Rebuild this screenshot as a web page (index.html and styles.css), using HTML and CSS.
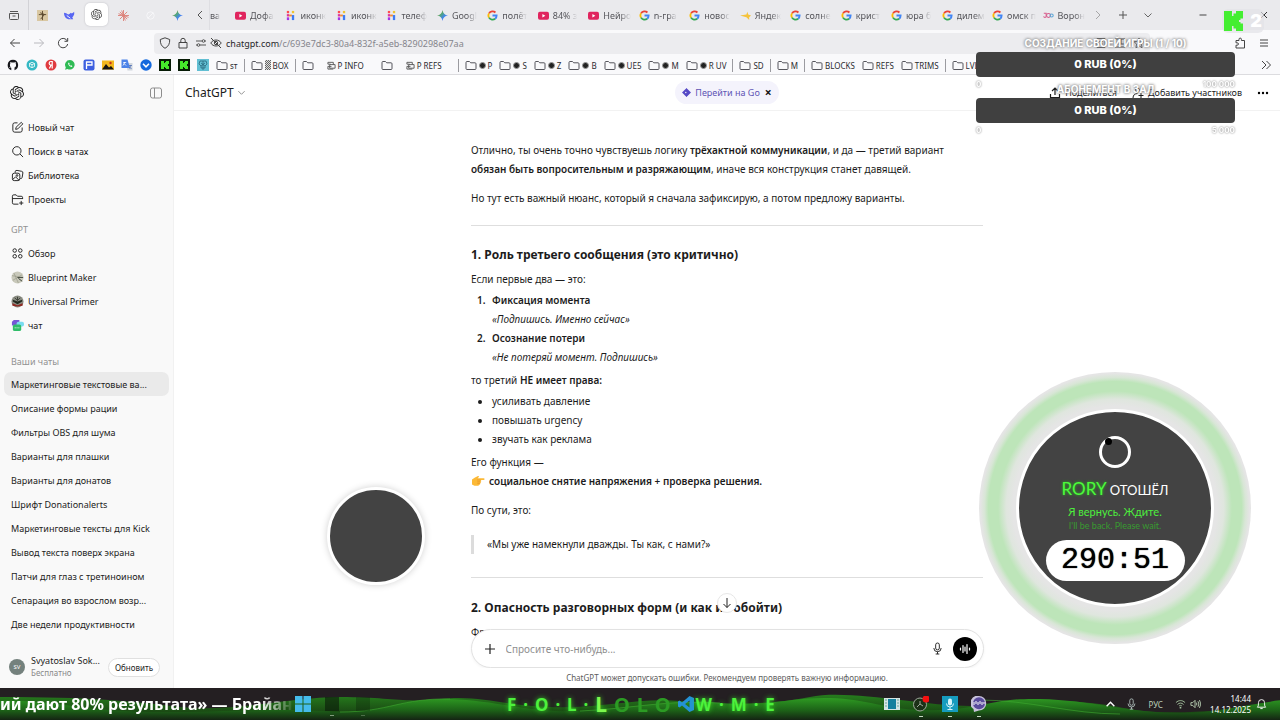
FILE: index.html
```html
<!DOCTYPE html>
<html lang="ru">
<head>
<meta charset="utf-8">
<title>ChatGPT</title>
<link rel="stylesheet" href="styles.css">
</head>
<body>
<svg class="defs" aria-hidden="true">
  <defs>
    <linearGradient id="gem" x1="0" y1="0" x2="1" y2="1"><stop offset="0" stop-color="#e5533d"/><stop offset=".35" stop-color="#56a86b"/><stop offset=".65" stop-color="#4285f4"/><stop offset="1" stop-color="#8a5cf6"/></linearGradient>
    <symbol id="gpt" viewBox="0 0 24 24"><path fill="currentColor" d="M22.282 9.821a5.985 5.985 0 0 0-.516-4.91 6.046 6.046 0 0 0-6.51-2.9A6.065 6.065 0 0 0 4.981 4.18a5.985 5.985 0 0 0-3.998 2.9 6.046 6.046 0 0 0 .743 7.097 5.98 5.98 0 0 0 .51 4.911 6.051 6.051 0 0 0 6.515 2.9A5.985 5.985 0 0 0 13.26 24a6.056 6.056 0 0 0 5.772-4.206 5.99 5.99 0 0 0 3.997-2.9 6.056 6.056 0 0 0-.747-7.073zM13.26 22.43a4.476 4.476 0 0 1-2.876-1.04l.141-.081 4.779-2.758a.795.795 0 0 0 .392-.681v-6.737l2.02 1.168a.071.071 0 0 1 .038.052v5.583a4.504 4.504 0 0 1-4.494 4.494zM3.6 18.304a4.47 4.47 0 0 1-.535-3.014l.142.085 4.783 2.759a.771.771 0 0 0 .78 0l5.843-3.369v2.332a.08.08 0 0 1-.033.062L9.74 19.95a4.5 4.5 0 0 1-6.14-1.646zM2.34 7.896a4.485 4.485 0 0 1 2.366-1.973V11.6a.766.766 0 0 0 .388.676l5.815 3.355-2.02 1.168a.076.076 0 0 1-.071 0l-4.83-2.786A4.504 4.504 0 0 1 2.34 7.872zm16.597 3.855l-5.833-3.387L15.119 7.2a.076.076 0 0 1 .071 0l4.83 2.791a4.494 4.494 0 0 1-.676 8.105v-5.678a.79.79 0 0 0-.407-.667zm2.01-3.023l-.141-.085-4.774-2.782a.776.776 0 0 0-.785 0L9.409 9.23V6.897a.066.066 0 0 1 .028-.061l4.83-2.787a4.5 4.5 0 0 1 6.68 4.66zm-12.64 4.135l-2.02-1.164a.08.08 0 0 1-.038-.057V6.075a4.5 4.5 0 0 1 7.375-3.453l-.142.08L8.704 5.46a.795.795 0 0 0-.393.681zm1.097-2.365l2.602-1.5 2.607 1.5v2.999l-2.597 1.5-2.607-1.5z"/></symbol>
    <symbol id="yt" viewBox="0 0 12 12"><rect x="0" y="2" width="12" height="8.500" rx="2" fill="#e0245e"/><path d="M4.800 4.300v3.800L8 6.200z" fill="#fff"/></symbol>
    <symbol id="goo" viewBox="0 0 12 12"><g fill="none" stroke-width="2"><path d="M9.200 2.700A4.500 4.500 0 0 0 2.200 3.700" stroke="#ea4335"/><path d="M2.200 3.700a4.500 4.500 0 0 0 0 4.600" stroke="#fbbc05"/><path d="M2.200 8.300a4.500 4.500 0 0 0 6.700 1.200" stroke="#34a853"/><path d="M8.900 9.500A4.500 4.500 0 0 0 10.500 6H6" stroke="#4285f4"/></g></symbol>
    <symbol id="hh" viewBox="0 0 12 12"><path d="M2 1h2.500v2.500H2z" fill="#ff4d4d"/><path d="M2 4.500h2.500V7H2z" fill="#e0359a"/><path d="M2 8h2.500v3H2z" fill="#a435e8"/><path d="M4.500 5h3v2h-3z" fill="#f48a2b"/><path d="M7.500 5.500H10V11H7.500z" fill="#3d7bf5"/><path d="M7.500 1H10v2.500H7.500z" fill="#efc430"/></symbol>
    <symbol id="spark" viewBox="0 0 12 12"><path d="M6 0c.5 3.500 2.500 5.500 6 6-3.500.5-5.500 2.500-6 6-.5-3.500-2.500-5.500-6-6 3.500-.5 5.500-2.500 6-6z" fill="url(#gem)"/></symbol>
    <symbol id="yan" viewBox="0 0 12 12"><path d="M0 6l7-1 1-3 1 3 3 1-2 2 0 3-3-3z" fill="#f5c33b"/></symbol>
    <symbol id="loop" viewBox="0 0 14 12"><g fill="none" stroke-width="1.300"><path d="M1 3h3v4a1.500 1.500 0 0 1-3 0" stroke="#d65b8b"/><circle cx="7" cy="6" r="2.500" stroke="#d65b8b"/><circle cx="11" cy="6" r="2" stroke="#5aa6d6"/></g></symbol>
    <symbol id="folder" viewBox="0 0 12 11"><path d="M1 2.500a1 1 0 0 1 1-1h2.500l1.200 1.300H10a1 1 0 0 1 1 1V8.500a1 1 0 0 1-1 1H2a1 1 0 0 1-1-1z" fill="none" stroke="#55555c" stroke-width="1"/></symbol>
    <symbol id="kick" viewBox="0 0 12 12"><path d="M0 0h12v12H0z" fill="#061b05"/><path d="M2 2h3v2h1V3h1V2h3v3H9v2h1v3H7V9H6V8H5v2H2z" fill="#45e82b"/></symbol>
    <symbol id="note" viewBox="0 0 10 10"><path d="M1 1.500h6v2.500M3 4h6v4H3zM1 6h4M1 1.500v2h3M1 6v3h6" fill="none" stroke="#555" stroke-width="1"/></symbol>
    <symbol id="mic" viewBox="0 0 12 14"><rect x="4" y="1" width="4" height="7.500" rx="2" fill="none" stroke="currentColor"/><path d="M2 6.500a4 4 0 0 0 8 0M6 10.500V13M4 13h4" fill="none" stroke="currentColor"/></symbol>
    <symbol id="down" viewBox="0 0 10 10"><path d="M1.500 3.500 5 7l3.500-3.500" fill="none" stroke="currentColor"/></symbol>
    <symbol id="right" viewBox="0 0 10 10"><path d="M3 1l4 4-4 4" fill="none" stroke="currentColor"/></symbol>
  </defs>
</svg>

<header class="browser">
  <div class="tabstrip">
    <button class="tab-tool overview" aria-label="Обзор вкладок"><svg viewBox="0 0 12 12"><path d="M2 2.500h8M1.500 4.500h9v5a1 1 0 0 1-1 1h-7a1 1 0 0 1-1-1zM4.500 7h3" fill="none" stroke="#555" stroke-width="1"/></svg></button>
    <div class="pinned">
      <button class="pin" aria-label="Вкладка 1"><svg viewBox="0 0 12 12"><path d="M0 0h12v12H0z" fill="#d9c7a2"/><path d="M6 1v10M2 5h8M3.500 3l5 2M4 10l4-5" stroke="#5b482d" fill="none"/></svg></button>
      <button class="pin" aria-label="Вкладка 2"><svg viewBox="0 0 12 12"><path d="M0 3c2 0 3 1 5 2 1-1 2-1 2-2 1 1 2 1 4-1 1 4-2 6-2 6l1 2H8C3 11 0 8 0 3z" fill="#5866f2"/><path d="M3 6l4 3" stroke="#fff"/></svg></button>
      <button class="pin active" aria-label="ChatGPT"><svg class="ink"><use href="#gpt"/></svg></button>
      <button class="pin" aria-label="Вкладка 4"><svg viewBox="0 0 12 12"><path d="M6 0v12M0 6h12M2 2l8 8M10 2l-8 8M4 .5l4 11M.5 4l11 4" stroke="#dc8078" stroke-width="1"/></svg></button>
      <button class="pin" aria-label="Вкладка 5"><svg viewBox="0 0 12 12"><circle cx="6" cy="6" r="4" fill="none" stroke="#f6f6f8"/><path d="M3 9l6-6" stroke="#f6f6f8"/></svg></button>
      <button class="pin" aria-label="Вкладка 6"><svg><use href="#spark"/></svg></button>
    </div>
    <button class="tab-tool back-tabs" aria-label="Прокрутить влево"><svg viewBox="0 0 10 10"><path d="M7 1 3 5l4 4" fill="none" stroke="#555"/></svg></button>
    <div class="tabs">
      <button class="tab cut"><span>ва</span></button>
      <button class="tab"><svg><use href="#yt"/></svg><span>Дофа</span></button>
      <button class="tab"><svg><use href="#hh"/></svg><span>иконк</span></button>
      <button class="tab"><svg><use href="#hh"/></svg><span>иконк</span></button>
      <button class="tab"><svg><use href="#hh"/></svg><span>телеф</span></button>
      <button class="tab"><svg><use href="#spark"/></svg><span>Googl</span></button>
      <button class="tab"><svg><use href="#goo"/></svg><span>полёт</span></button>
      <button class="tab"><svg><use href="#yt"/></svg><span>84% з</span></button>
      <button class="tab"><svg><use href="#yt"/></svg><span>Нейро</span></button>
      <button class="tab"><svg><use href="#goo"/></svg><span>n-гра</span></button>
      <button class="tab"><svg><use href="#goo"/></svg><span>новос</span></button>
      <button class="tab"><svg><use href="#yan"/></svg><span>Яндек</span></button>
      <button class="tab"><svg><use href="#goo"/></svg><span>солне</span></button>
      <button class="tab"><svg><use href="#goo"/></svg><span>крист</span></button>
      <button class="tab"><svg><use href="#goo"/></svg><span>юра б</span></button>
      <button class="tab"><svg><use href="#goo"/></svg><span>дилем</span></button>
      <button class="tab"><svg><use href="#goo"/></svg><span>омск п</span></button>
      <button class="tab"><svg><use href="#loop"/></svg><span>Ворон</span></button>
    </div>
    <div class="window-tools">
      <button class="tab-tool faint" aria-label="Прокрутить вправо"><svg><use href="#right"/></svg></button>
      <button class="tab-tool" aria-label="Новая вкладка"><svg viewBox="0 0 10 10"><path d="M5 1v8M1 5h8" stroke="#555"/></svg></button>
      <button class="tab-tool" aria-label="Все вкладки"><svg><use href="#down"/></svg></button>
    </div>
    <div class="window-buttons">
      <button class="tab-tool" aria-label="Свернуть"><svg viewBox="0 0 10 10"><path d="M1.500 5h7" stroke="#444"/></svg></button>
      <button class="tab-tool" aria-label="Закрыть"><svg viewBox="0 0 10 10"><path d="M2 2l6 6M8 2 2 8" stroke="#333"/></svg></button>
    </div>
  </div>

  <div class="toolbar">
    <div class="nav-buttons">
      <button class="tool" aria-label="Назад"><svg viewBox="0 0 12 12"><path d="M11 6H1.500M5.500 2l-4 4 4 4" fill="none" stroke="#444"/></svg></button>
      <button class="tool" aria-label="Вперёд"><svg viewBox="0 0 12 12"><path d="M1 6h9.500M6.500 2l4 4-4 4" fill="none" stroke="#b9b9be"/></svg></button>
      <button class="tool" aria-label="Обновить страницу"><svg viewBox="0 0 12 12"><path d="M10.300 4A4.700 4.700 0 1 0 10.700 7M10.700 1v3.300H7.500" fill="none" stroke="#444"/></svg></button>
    </div>
    <div class="urlbar">
      <svg class="uicon" viewBox="0 0 12 12"><path d="M6 .8 10.700 2.500c.2 4-1.200 7-4.700 8.800C2.500 9.500 1.100 6.500 1.300 2.500z" fill="none" stroke="#444"/></svg>
      <svg class="uicon lock" viewBox="0 0 12 12"><path d="M2 5.500h8v5.500H2zM3.800 5.500V3.500a2.200 2.200 0 0 1 4.400 0v2" fill="none" stroke="#444"/></svg>
      <svg class="uicon" viewBox="0 0 12 12"><path d="M1 4h6M5 8h6M10 4h1M1 8h1" stroke="#555" fill="none"/><circle cx="8.500" cy="4" r="1.300" fill="none" stroke="#555"/><circle cx="3.500" cy="8" r="1.300" fill="none" stroke="#555"/></svg>
      <svg class="uicon" viewBox="0 0 12 12"><path d="M.8 6C3 2 9 2 11.200 6 9 10 3 10 .8 6zM1 1l10 10" fill="none" stroke="#444"/><circle cx="6" cy="6" r="1.700" fill="none" stroke="#444"/></svg>
      <span class="url"><b>chatgpt.com</b>/c/693e7dc3-80a4-832f-a5eb-8290298e07aa</span>
      <span class="url-actions">
        <svg viewBox="0 0 12 12"><path d="M2 1.500h8v9H2zM4 4.500h4M4 7h4" fill="none" stroke="#555"/></svg>
        <svg viewBox="0 0 12 12"><path d="M1 2h4v5H1zM7 2h4v5H7zM1 7v3h10V7M6 1v7" fill="none" stroke="#333"/></svg>
        <svg viewBox="0 0 12 12"><path d="M6 1l1.500 3.300 3.500.4-2.600 2.400.7 3.600L6 9l-3.100 1.700.7-3.600L1 4.700l3.500-.4z" fill="none" stroke="#555"/></svg>
      </span>
    </div>
    <button class="tool puzzle" aria-label="Расширения"><svg viewBox="0 0 12 12"><path d="M2 11V8.200h1.200a1.200 1.200 0 0 0 0-2.400H2V3.500h3V2.300a1.200 1.200 0 0 1 2.400 0v1.200H10.500V11z" fill="none" stroke="#444"/></svg></button>
    <button class="tool" aria-label="Меню"><svg viewBox="0 0 12 12"><path d="M2 3h8M2 6h8M2 9h8" stroke="#444"/></svg></button>
  </div>

  <nav class="bookmarks" aria-label="Закладки">
    <div class="favs">
      <svg viewBox="0 0 12 12"><path d="M6 .7a5.400 5.400 0 0 0-1.700 10.500V9c-1.500.4-2-.6-2.200-1 .9 0 1.400 1 2.300.7C3 8 2.500 6 3.300 4.500L3.200 3l1.500.6c1-.2 1.700-.2 2.600 0L8.800 3l-.1 1.500C9.500 6 9 8 7.500 8.600v2.600A5.400 5.400 0 0 0 6 .7z" fill="#17171b"/></svg>
      <svg viewBox="0 0 12 12"><circle cx="6" cy="6" r="5.500" fill="#35b8c4"/><path d="M3.500 4.500 6 3.300l2.500 1.200v3L6 8.700 3.500 7.500zM3.500 4.500 6 5.700l2.500-1.200M6 5.700v3" fill="none" stroke="#fff" stroke-width=".8"/></svg>
      <svg viewBox="0 0 12 12"><circle cx="6" cy="6" r="5.500" fill="#e03a3f"/><path d="M7.200 9.500v-7H6a1.800 1.800 0 0 0 0 3.700h1.200M6 6.200 4.400 9.500" fill="none" stroke="#fff" stroke-width="1.200"/></svg>
      <svg viewBox="0 0 12 12"><path d="M6 1a4.800 4.800 0 1 1-2.500 9L1 10.700l.8-2.300A4.800 4.800 0 0 1 6 1z" fill="#2fbb55"/><path d="M4.200 3.700c-.3 2 1.500 4.200 3.800 4.200l.3-1-1.100-.6-.6.500C5.800 6.400 5.400 5.900 5.200 5.300l.4-.5-.5-1.100z" fill="#fff"/></svg>
      <svg viewBox="0 0 12 12"><rect x=".5" y=".5" width="11" height="11" rx="2" fill="#3d5fe0"/><path d="M3.500 10V3H9v3H3.500" fill="none" stroke="#fff" stroke-width="1.300"/></svg>
      <svg viewBox="0 0 12 12"><path d="M0 1.500h12v9H0z" fill="#f3b71d"/><path d="M0 10.500 4 5l3 3.500L9 7l3 3.500z" fill="#171511"/><circle cx="8.500" cy="4" r="1.200" fill="#c53123"/></svg>
      <svg viewBox="0 0 12 12"><path d="M5 4h6.500v7.500H6.500z" fill="#d2d7de"/><path d="M.5.5h6L9 9H.5z" fill="#4d83e8"/><path d="M2.200 3.500h3M3.500 3v1L2 6.500M3 4.500l2 2" stroke="#fff" fill="none" stroke-width=".8"/><path d="M8 6.500h3M9.500 6.500l-1 3M8.500 8l2 2" stroke="#4d6fb8" fill="none" stroke-width=".8"/></svg>
      <svg viewBox="0 0 12 12"><circle cx="6" cy="6" r="5.700" fill="#1569dd"/><path d="M3 4.800 6 7.800l3-3" fill="none" stroke="#fff" stroke-width="1.600"/></svg>
      <svg><use href="#kick"/></svg>
      <svg><use href="#kick"/></svg>
      <svg viewBox="0 0 12 12"><path d="M0 0h12v12H0z" fill="#62bfd3"/><path d="M3 2h6l1 3-2 2v2H4V7L2 5zM4 4l4 3M8 4 4 7M6 2v9" fill="none" stroke="#28677c" stroke-width=".8"/></svg>
    </div>
    <a class="bm" href="#"><svg><use href="#folder"/></svg>sт</a><i class="sep"></i>
    <a class="bm" href="#"><svg><use href="#folder"/></svg><span class="shade"></span>BOX</a><i class="sep"></i>
    <a class="bm blank" href="#" aria-label="Папка"><svg><use href="#folder"/></svg></a>
    <a class="bm roomy" href="#"><svg class="n"><use href="#note"/></svg>P INFO</a>
    <a class="bm blank" href="#" aria-label="Папка"><svg><use href="#folder"/></svg></a>
    <a class="bm roomy" href="#"><svg class="n"><use href="#note"/></svg>P REFS</a><i class="sep"></i>
    <a class="bm" href="#"><svg><use href="#folder"/></svg><span class="dot"></span>P</a>
    <a class="bm" href="#"><svg><use href="#folder"/></svg><span class="dot"></span>S</a>
    <a class="bm" href="#"><svg><use href="#folder"/></svg><span class="dot"></span>Z</a>
    <a class="bm" href="#"><svg><use href="#folder"/></svg><span class="dot"></span>B</a>
    <a class="bm" href="#"><svg><use href="#folder"/></svg><span class="dot"></span>UE5</a>
    <a class="bm" href="#"><svg><use href="#folder"/></svg><span class="dot"></span>M</a>
    <a class="bm" href="#"><svg><use href="#folder"/></svg><span class="dot"></span>R UV</a><i class="sep"></i>
    <a class="bm" href="#"><svg><use href="#folder"/></svg>SD</a><i class="sep"></i>
    <a class="bm" href="#"><svg><use href="#folder"/></svg>M</a><i class="sep"></i>
    <a class="bm" href="#"><svg><use href="#folder"/></svg>BLOCKS</a>
    <a class="bm" href="#"><svg><use href="#folder"/></svg>REFS</a>
    <a class="bm" href="#"><svg><use href="#folder"/></svg>TRIMS</a><i class="sep"></i>
    <a class="bm" href="#"><svg><use href="#folder"/></svg>LVL</a>
    <button class="tool more" aria-label="Ещё закладки"><svg viewBox="0 0 12 12"><path d="M2 2l4 4-4 4M6.500 2l4 4-4 4" fill="none" stroke="#444"/></svg></button>
  </nav>
</header>

<div class="app">
  <aside class="sidebar">
    <div class="side-top">
      <svg class="logo"><use href="#gpt"/></svg>
      <button class="plain" aria-label="Закрыть боковую панель"><svg viewBox="0 0 14 14"><rect x="1.500" y="2" width="11" height="10" rx="2" fill="none" stroke="#8d8d8d"/><path d="M5.500 2v10" stroke="#8d8d8d"/></svg></button>
    </div>
    <nav class="group">
      <a class="item" href="#"><svg viewBox="0 0 14 14"><path d="M7 2H4a2 2 0 0 0-2 2v6a2 2 0 0 0 2 2h6a2 2 0 0 0 2-2V7M5 9l.5-2.300L11 1.500l1.700 1.600L7.300 8.500z" fill="none" stroke="currentColor"/></svg>Новый чат</a>
      <a class="item" href="#"><svg viewBox="0 0 14 14"><circle cx="6.300" cy="6.300" r="4.500" fill="none" stroke="currentColor"/><path d="M9.700 9.700 13 13" stroke="currentColor"/></svg>Поиск в чатах</a>
      <a class="item" href="#"><svg viewBox="0 0 14 14"><rect x="1.500" y="4.500" width="8" height="8" rx="2" fill="none" stroke="currentColor"/><path d="M4.500 4V3a1.700 1.700 0 0 1 2-1.500l5 1a1.600 1.600 0 0 1 1.300 1.800L12 9a1.700 1.700 0 0 1-2 1.300M2 11l3-2.500 3.500 3.500" fill="none" stroke="currentColor"/><circle cx="6.500" cy="7" r=".9" fill="none" stroke="currentColor"/></svg>Библиотека</a>
      <a class="item" href="#"><svg viewBox="0 0 14 14"><path d="M8 12H3a1.500 1.500 0 0 1-1.500-1.500v-7A1.500 1.500 0 0 1 3 2h2.500L7 3.500h4A1.500 1.500 0 0 1 12.500 5v1.500M1.500 6h11M11 8.500v4.500M8.800 10.800h4.500" fill="none" stroke="currentColor"/></svg>Проекты</a>
    </nav>
    <h2 class="label">GPT</h2>
    <nav class="group">
      <a class="item" href="#"><svg viewBox="0 0 14 14"><g fill="none" stroke="currentColor"><circle cx="4" cy="3.800" r="1.900"/><circle cx="10" cy="3.800" r="1.900"/><circle cx="4" cy="10" r="1.900"/><circle cx="10" cy="10" r="1.900"/></g></svg>Обзор</a>
      <a class="item" href="#"><svg viewBox="0 0 14 14"><circle cx="7" cy="7" r="6.500" fill="#c9c9bb"/><path d="M1 5l12 2M3 2l5 11M2 10l10-6M7 7l5 4" stroke="#8f907f" stroke-width=".6"/><path d="M7 7h6M8 8l4 3" stroke="#434a3f"/></svg>Blueprint Maker</a>
      <a class="item" href="#"><svg viewBox="0 0 14 14"><circle cx="7" cy="7" r="6.500" fill="#8a8c82"/><path d="M1.500 9l5.500 2 5.500-2v2.500l-5.500 1-5.500-1z" fill="#8f2923"/><path d="M2 7l5 3 5-3V5L7 7 2 5z" fill="#22291f"/><path d="M4 3l3 3 3-3M7 2v4" stroke="#3a3f35" fill="none"/></svg>Universal Primer</a>
      <a class="item" href="#"><svg viewBox="0 0 14 14"><path d="M3 1h6v6H1V3z" fill="#7656d5"/><rect x="6" y="3" width="8" height="5" rx="2" fill="#7adcf0"/><rect x="2" y="6" width="9" height="7" rx="2" fill="#30bd69"/><path d="M4 9.500h5" stroke="#fff" stroke-dasharray="1 1"/></svg>чат</a>
    </nav>
    <h2 class="label">Ваши чаты</h2>
    <nav class="group chats">
      <a class="item current" href="#">Маркетинговые текстовые ва...</a>
      <a class="item" href="#">Описание формы рации</a>
      <a class="item" href="#">Фильтры OBS для шума</a>
      <a class="item" href="#">Варианты для плашки</a>
      <a class="item" href="#">Варианты для донатов</a>
      <a class="item" href="#">Шрифт Donationalerts</a>
      <a class="item" href="#">Маркетинговые тексты для Kick</a>
      <a class="item" href="#">Вывод текста поверх экрана</a>
      <a class="item" href="#">Патчи для глаз с третиноином</a>
      <a class="item" href="#">Сепарация во взрослом возр...</a>
      <a class="item" href="#">Две недели продуктивности</a>
    </nav>
    <div class="account">
      <span class="avatar">SV</span>
      <span class="who"><span>Svyatoslav Sok...</span><small>Бесплатно</small></span>
      <button class="upgrade">Обновить</button>
    </div>
  </aside>

  <main class="main">
    <div class="topbar">
      <button class="model">ChatGPT <svg><use href="#down"/></svg></button>
      <div class="promo"><svg viewBox="0 0 12 12"><path d="M6 .5 11.500 6 6 11.500.5 6z" fill="#5549c5" stroke="#5549c5" stroke-linejoin="round"/><path d="M4 6h2M5 5v2" stroke="#fff" stroke-width=".8"/></svg><a href="#">Перейти на Go</a><button class="plain" aria-label="Скрыть">×</button></div>
      <div class="actions">
        <button class="action share"><svg viewBox="0 0 12 12"><path d="M6 8V1.500M3 4l3-3 3 3M1.500 7v3.500h9V7" fill="none" stroke="currentColor" stroke-width="1.200"/></svg>Поделиться</button>
        <button class="action"><svg viewBox="0 0 12 12"><circle cx="5.500" cy="3" r="2" fill="none" stroke="currentColor"/><path d="M1 11c0-3 2-4.500 4.500-4.500M9 6v5M6.500 8.500h5" fill="none" stroke="currentColor"/></svg>Добавить участников</button>
        <button class="action dots" aria-label="Ещё"><svg viewBox="0 0 12 12"><circle cx="2" cy="6" r="1.200"/><circle cx="6" cy="6" r="1.200"/><circle cx="10" cy="6" r="1.200"/></svg></button>
      </div>
    </div>

    <div class="thread">
      <article class="message">
        <p class="lead">Отлично, ты очень точно чувствуешь логику <b>трёхактной коммуникации</b>, и да — третий вариант <b>обязан быть вопросительным и разряжающим</b>, иначе вся конструкция станет давящей.</p>
        <p>Но тут есть важный нюанс, который я сначала зафиксирую, а потом предложу варианты.</p>
        <hr>
        <h3>1. Роль третьего сообщения (это критично)</h3>
        <p class="tight">Если первые два — это:</p>
        <ol>
          <li><b>Фиксация момента</b><br><em>«Подпишись. Именно сейчас»</em></li>
          <li><b>Осознание потери</b><br><em>«Не потеряй момент. Подпишись»</em></li>
        </ol>
        <p class="tight">то третий <b>НЕ имеет права:</b></p>
        <ul>
          <li>усиливать давление</li>
          <li>повышать urgency</li>
          <li>звучать как реклама</li>
        </ul>
        <p class="tight">Его функция —<br><svg class="hand" viewBox="0 0 14 12"><path d="M1 4.500 4 2.500l3-1.500c1-.3 1.300.7.6 1.300L6.700 3.300h6c1.200 0 1.200 1.700 0 1.700H9.500c1 .3 1 1.500 0 1.700.6.500.4 1.500-.4 1.600.4.700 0 1.500-.8 1.500-.2.8-1 1-2 1H3.500L1 9.500z" fill="#fcb936"/><path d="M6 5h3.500M6.300 6.800h3M6.300 8.400h2.500" stroke="#e08a25" stroke-width=".6"/></svg><b>социальное снятие напряжения + проверка решения.</b></p>
        <p>По сути, это:</p>
        <blockquote>«Мы уже намекнули дважды. Ты как, с нами?»</blockquote>
        <hr class="wide">
        <h3>2. Опасность разговорных форм (и как их обойти)</h3>
        <p class="tight">Фр</p>
      </article>
      <div class="dock">
        <button class="scroll-down" aria-label="Прокрутить вниз"><svg viewBox="0 0 12 12"><path d="M6 1v9.500M2.500 7 6 10.500 9.500 7" fill="none" stroke="#222"/></svg></button>
        <div class="composer">
          <button class="plain add" aria-label="Добавить файл"><svg viewBox="0 0 12 12"><path d="M6 1v10M1 6h10" stroke="#222" stroke-width="1.200"/></svg></button>
          <input type="text" aria-label="Сообщение" placeholder="Спросите что-нибудь...">
          <button class="plain micro" aria-label="Диктовка"><svg><use href="#mic"/></svg></button>
          <button class="voice" aria-label="Голосовой режим"><svg viewBox="0 0 12 12"><path d="M1.500 5v2M4 2.500v7M6 4v4M8 1.500v9M10.500 5v2" stroke="#fff" stroke-width="1.200" stroke-linecap="round"/></svg></button>
        </div>
        <p class="note">ChatGPT может допускать ошибки. Рекомендуем проверять важную информацию.</p>
      </div>
    </div>
  </main>
</div>

<footer class="taskbar">
  <svg class="waves" viewBox="0 0 1280 32" preserveAspectRatio="none" aria-hidden="true">
    <defs>
      <linearGradient id="w1" x1="0" y1="0" x2="0" y2="1"><stop offset="0" stop-color="#2e9a22"/><stop offset=".55" stop-color="#1d6318"/><stop offset="1" stop-color="#142413"/></linearGradient>
      <linearGradient id="w2" x1="0" y1="0" x2="0" y2="1"><stop offset="0" stop-color="#267d1d"/><stop offset="1" stop-color="#15320f"/></linearGradient>
    </defs>
    <path d="M0 9C90 9 130 13 180 19S290 9 340 9s60 6 100 2 60 6 110 8 90-10 130-6 90 4 130-4 110 9 160 9 60-8 110-4 50 12 110 10 120-13 190-13v21H0z" fill="url(#w2)"/>
    <path d="M0 13c50-2 80 10 150 11s110-5 190 0c50 0 60-14 110-13 50 2 80 14 130 12s90-12 140-8 70-6 110-5 60 14 110 12 50-12 100-11 90 14 140 14 90-17 140-14 60 8 60 8v13H0z" fill="url(#w1)"/>
    <path d="M340 24c50 0 60-14 110-13M580 23c50-2 90-12 140-8M980 12c50 0 90 14 140 14" fill="none" stroke="#40aa31" opacity=".6"/>
  </svg>
  <p class="ticker">ий дают 80% результата» — Брайан</p>
  <button class="start" aria-label="Пуск"><svg viewBox="0 0 16 16"><path d="M0 0h7.500v7.500H0zM8.500 0H16v7.500H8.500zM0 8.500h7.500V16H0zM8.500 8.500H16V16H8.500z" fill="#45bceb"/></svg></button>
  <span class="ghost run"></span><span class="ghost run faded"></span>
  <p class="follow"><span>F</span><i>·</i><span>O</span><i>·</i><span>L</span><i>·</i><span class="big">L</span><span class="dim">O</span><span class="dim">L</span><span class="dim">O</span><svg class="code" viewBox="0 0 16 16"><path d="M11.500 0 16 2v12l-4.500 2L4 9.500 1.500 11.500 0 10.500V5.500L1.500 4.500 4 6.500zM11.500 4.500 7 8l4.500 3.500z" fill="#2492d4"/></svg><span>W</span><i>·</i><span>M</span><i>·</i><span>E</span></p>
  <div class="apps">
    <button class="task" aria-label="Видео"><svg viewBox="0 0 16 16"><path d="M0 2h16v12H0z" fill="#d5e5e4"/><path d="M4 3h8v10H4z" fill="#15809e"/><path d="M1 4h2M1 7h2M1 10h2M13 4h2M13 7h2M13 10h2" stroke="#6da79d"/></svg></button>
    <button class="task run" aria-label="OBS"><svg viewBox="0 0 16 16"><circle cx="7" cy="8.500" r="6.500" fill="#1c3118" stroke="#9ea99b"/><path d="M7 8V5M7 8l3 2M7 8l-3 3" stroke="#9ea99b" fill="none"/><circle cx="13" cy="3" r="3.500" fill="#f41010"/></svg></button>
    <button class="task run" aria-label="Микрофон"><svg viewBox="0 0 16 16"><path d="M0 0h16v16H0z" fill="#169cbf"/><rect x="6" y="2.500" width="4" height="7" rx="2" fill="#d4f4fb"/><path d="M4.500 7.500a3.500 3.500 0 0 0 7 0M8 11v2.500M5.500 13.500h5" fill="none" stroke="#d4f4fb"/></svg></button>
    <button class="task run" aria-label="Чат"><svg viewBox="0 0 16 16"><path d="M8 0a7 7 0 0 1 0 14.500L3 16l-.5-3A7.200 7.200 0 0 1 8 0z" fill="#c8c2dc"/><circle cx="8" cy="7.300" r="6" fill="#594a9c"/><path d="M3 6v3M5 5v3M7 6v3M9 5v3M11 6v3M13 6v2" stroke="#fff"/></svg></button>
  </div>
  <div class="tray">
    <svg class="t-up" viewBox="0 0 10 10"><path d="M1.500 7 5 3.500 8.500 7" fill="none" stroke="#fff" stroke-width="1.300"/></svg>
    <svg class="t-mic"><use href="#mic"/></svg>
    <span class="lang">РУС</span>
    <svg viewBox="0 0 12 12"><path d="M1 4.500c3-3 7-3 10 0M2.700 6.500c2-2 4.600-2 6.600 0M4.400 8.300c1-1 2.200-1 3.200 0" fill="none" stroke="#a5c49f"/><circle cx="6" cy="10" r="1" fill="#a5c49f"/></svg>
    <svg viewBox="0 0 12 12"><path d="M1 4.500h2L5.500 2v8L3 7.500H1zM7 4.500q1 1.500 0 3M8.700 3q2 3 0 6M10.300 1.700q3 4.300 0 8.600" fill="none" stroke="#b9d0b4"/></svg>
    <time class="clock"><span>14:44</span><span>14.12.2025</span></time>
    <svg class="bell" viewBox="0 0 12 12"><path d="M1.500 9.500C3 8 2.500 6.500 2.700 4.500a3.300 3.300 0 0 1 6.600 0C9.500 6.500 9 8 10.500 9.500zM4.700 11h2.600" fill="none" stroke="#fff"/></svg>
  </div>
</footer>

<div class="cover" aria-hidden="true"></div>

<section class="away">
  <div class="away-disc">
    <span class="spinner"></span>
    <p class="away-title"><b>RORY</b> ОТОШЁЛ</p>
    <p class="away-ru">Я вернусь. Ждите.</p>
    <p class="away-en">I'll be back. Please wait.</p>
    <p class="timer">290:51</p>
  </div>
</section>

<section class="goals">
  <div class="goal"><p class="goal-title">СОЗДАНИЕ СВОЕЙ ИГРЫ (1 / 10)</p><div class="goal-bar">0 RUB (0%)</div><p class="goal-scale"><span>0</span><span>100 000</span></p></div>
  <div class="goal"><p class="goal-title">АБОНЕМЕНТ В ЗАЛ</p><div class="goal-bar">0 RUB (0%)</div><p class="goal-scale"><span>0</span><span>5 000</span></p></div>
</section>

<div class="platform"><svg viewBox="0 0 20 20"><path d="M0 0h8v5h1.500V2.500H12V0h7v7.500h-2.500V9H15v2h1.500v1.500H19V20h-7v-2.500H9.500V15H8v5H0z" fill="#44ee31"/></svg><span>2</span></div>
</body>
</html>
```

FILE: styles.css
```css
:root {
  --ui: "Noto Sans", "Open Sans", sans-serif;
  --ink: #1c1c1c;
}
* { box-sizing: border-box; }
body {
  margin: 0;
  height: 100vh;
  display: flex;
  flex-direction: column;
  overflow: hidden;
  position: relative;
  background: #fff;
  color: var(--ink);
  font-family: var(--ui);
  font-size: 10px;
}
button { border: 0; background: none; padding: 0; margin: 0; font: inherit; color: inherit; }
a { color: inherit; text-decoration: none; }
p, h2, h3, ol, ul, blockquote { margin: 0; padding: 0; }
svg { display: block; flex: none; }
.defs { position: absolute; width: 0; height: 0; }

/* browser chrome */
.browser { flex: none; background: #f9f9fb; border-bottom: 1px solid #dcdcdf; color: #3b3b40; }
.tabstrip { display: flex; align-items: center; height: 30px; background: #eaeaed; }
.tab-tool, .tool { display: flex; align-items: center; justify-content: center; flex: none; }
.tab-tool svg { width: 10px; height: 10px; }
.overview { width: 29px; height: 30px; border-right: 1px solid #d2d2d6; }
.overview svg { width: 12px; height: 12px; }
.pinned { display: flex; }
.pin { width: 27px; height: 26px; display: flex; align-items: center; justify-content: center; border-radius: 5px; }
.pin svg { width: 11px; height: 11px; }
.pin.active { background: #fff; box-shadow: 0 0 2px #b9b9bf; width: 23px; height: 23px; margin: 1px 2px; }
.ink { color: #444; }
.back-tabs { width: 18px; }
.tabs { display: flex; flex: 1; min-width: 0; border-left: 1px solid #dedee2; }
.tab { flex: 1; min-width: 0; display: flex; align-items: center; gap: 4px; height: 30px; text-align: left; font-size: 9px; color: #55555a; }
.tab svg { width: 11px; height: 11px; }
.tab span { white-space: nowrap; mask-image: linear-gradient(90deg, #000 60%, transparent); }
.tab.cut { flex: 0 0 25px; }
.window-tools { display: flex; gap: 15px; flex: none; color: #666; }
.faint { opacity: .5; }
.window-buttons { display: flex; gap: 51px; flex: none; padding: 0 11px 0 45px; }
.toolbar { display: flex; align-items: center; height: 26px; padding: 0 10px 0 9px; }
.nav-buttons { display: flex; gap: 12px; width: 145px; flex: none; }
.tool svg { width: 12px; height: 12px; }
.urlbar { flex: 1; min-width: 0; height: 21px; display: flex; align-items: center; gap: 3px; border-radius: 4px; background: #ececef; padding: 0 5px; }
.uicon { width: 12px; height: 12px; }
.uicon.lock { margin: 0 3px; }
.url { margin-left: 1px; font-size: 9px; color: #85858c; white-space: nowrap; flex: 1; }
.url b { font-weight: 400; color: #26262a; }
.url-actions { display: flex; gap: 7px; }
.url-actions svg { width: 12px; height: 12px; }
.puzzle { margin: 0 12px 0 84px; }
.bookmarks { display: flex; align-items: center; height: 18px; padding: 0 8px 0 7px; gap: 7px; white-space: nowrap; font-size: 8px; color: #2b2b30; }
.favs { display: flex; gap: 7px; }
.favs svg { width: 12px; height: 12px; }
.bm { display: flex; align-items: center; gap: 2px; flex: none; }
.bm svg { width: 12px; height: 11px; }
.bm svg.n { width: 9px; height: 9px; }
.blank { margin-right: 6px; }
.roomy { margin-right: 10px; }
.sep { width: 1px; height: 13px; background: #9b9ba0; flex: none; margin: 0 -1px; }
.shade { width: 6px; height: 10px; background: repeating-conic-gradient(#666 0 25%, #ddd 0 50%) 0 0 / 2px 2px; }
.dot { width: 7px; height: 7px; border-radius: 50%; background: #222; border: 1px solid #999; }
.more { margin-left: auto; }

/* sidebar */
.app { flex: 1; min-height: 0; display: flex; }
.sidebar { flex: 0 0 174px; display: flex; flex-direction: column; background: #f9f9f9; border-right: 1px solid #f1f1f1; padding: 0 4px; }
.side-top { display: flex; align-items: center; justify-content: space-between; height: 35px; padding: 0 6px 0 6px; }
.logo { width: 14px; height: 14px; }
.plain { display: flex; align-items: center; justify-content: center; }
.side-top .plain svg { width: 14px; height: 14px; }
.group { display: flex; flex-direction: column; }
.side-top + .group { margin-top: 5px; }
.item { display: flex; align-items: center; gap: 4px; height: 24px; padding: 0 7px; border-radius: 7px; white-space: nowrap; font-size: 9px; flex: none; }
.item svg { width: 13px; height: 13px; }
.current { background: #eaeaea; }
.label { height: 24px; line-height: 24px; padding: 0 7px; font-size: 9px; font-weight: 400; color: #929292; flex: none; }
.label + .group { margin-top: -1px; }
.label + .chats { margin-top: -2px; }
.group + .label { margin-top: 7px; }
.group + .label:not(:nth-of-type(1)) { margin-top: 13px; }
.account { margin-top: auto; display: flex; align-items: center; gap: 6px; height: 42px; padding: 0 9px 0 5px; }
.avatar { width: 16px; height: 16px; border-radius: 50%; background: #74817d; color: #fff; font-size: 6px; display: flex; align-items: center; justify-content: center; }
.who { flex: 1; display: flex; flex-direction: column; line-height: 12px; font-size: 9px; white-space: nowrap; }
.who small { font-size: 8px; color: #8a8a8a; }
.upgrade { height: 19px; padding: 0 6px; border: 1px solid #e0e0e0; border-radius: 10px; background: #fff; font-size: 8px; }

/* conversation */
.main { flex: 1; min-width: 0; display: flex; flex-direction: column; }
.topbar { flex: none; height: 36px; display: grid; grid-template-columns: 1fr auto 1fr; align-items: center; border-bottom: 1px solid #f2f2f2; padding: 0 11px; }
.model { display: flex; align-items: center; gap: 3px; font-size: 12px; justify-self: start; }
.model svg { width: 9px; height: 9px; color: #888; }
.promo { display: flex; align-items: center; gap: 4px; height: 23px; padding: 0 7px; border-radius: 12px; background: #f4f3fc; color: #5f54b4; font-size: 9px; }
.promo svg { width: 9px; height: 9px; }
.promo .plain { color: #111; font-size: 12px; font-weight: 700; line-height: 12px; margin-left: 1px; }
.actions { justify-self: end; display: flex; align-items: center; gap: 15px; }
.action { display: flex; align-items: center; gap: 4px; font-size: 9px; }
.action svg { width: 12px; height: 12px; }
.thread { flex: 1; min-height: 0; position: relative; }
.message { max-width: 512px; margin: 0 auto; padding-top: 30px; height: 100%; overflow: hidden; font-size: 10px; line-height: 19px; }
.message .lead { padding-right: 24px; }
.message p + p { margin-top: 10px; }
.message hr { border: 0; border-top: 1px solid #dedede; margin: 17px 0 19px; }
.message hr.wide { margin: 23px 0 20px; }
.message h3 { font: 700 12px/20px var(--ui); white-space: nowrap; }
.message b { font-weight: 600; }
.message .tight { margin-top: 4px; }
.message h3 + .tight { margin-top: 5px; }
.message ol, .message ul { margin-top: 2px; padding-left: 21px; }
.message ol { padding-left: 17px; }
.message ol li { padding-left: 4px; }
.message ol li::marker { font-weight: 600; }
.message ul { list-style: disc; }
.hand { display: inline-block; width: 14px; height: 12px; vertical-align: -2px; margin-right: 4px; }
.message blockquote { margin-top: 15px; border-left: 3px solid #dcdcdc; padding-left: 13px; }
.dock { position: absolute; left: 0; right: 0; bottom: 0; display: flex; flex-direction: column; align-items: center; }
.scroll-down { width: 20px; height: 20px; border-radius: 50%; border: 1px solid #e7e7e7; background: #fff; display: flex; align-items: center; justify-content: center; margin-bottom: 16px; }
.scroll-down svg { width: 12px; height: 12px; }
.composer { width: 100%; max-width: 513px; height: 39px; display: flex; align-items: center; background: #fff; border: 1px solid #e2e2e2; border-radius: 20px; box-shadow: 0 1px 3px #0000000d; padding: 0 6px 0 12px; }
.composer input { flex: 1; min-width: 0; border: 0; outline: 0; background: none; font: 10px var(--ui); padding: 0 0 0 10px; }
.composer input::placeholder { color: #8f8f8f; opacity: 1; }
.add svg { width: 12px; height: 12px; }
.micro { margin-right: 10px; }
.micro svg { width: 11px; height: 13px; }
.voice { width: 24px; height: 24px; border-radius: 50%; background: #000; display: flex; align-items: center; justify-content: center; }
.voice svg { width: 12px; height: 12px; }
.note { width: 100%; background: #fff; text-align: center; font: 8px/20px var(--ui); color: #5c5c5c; }

/* taskbar */
.taskbar { flex: none; height: 32px; position: relative; display: flex; align-items: center; background: #241f22; color: #fff; overflow: hidden; }
.waves { position: absolute; inset: 0; width: 100%; height: 100%; }
.taskbar > :not(.waves) { position: relative; }
.ticker { width: 295px; flex: none; white-space: nowrap; font: 700 16px/20px "Noto Sans", sans-serif; mask-image: linear-gradient(90deg, #000 88%, transparent); }
.start svg { width: 16px; height: 16px; }
.ghost { width: 14px; height: 14px; background: #0b1a0a; opacity: .6; margin-left: 14px; }
.ghost.faded { opacity: .3; margin-left: 17px; }
.run::after { content: ""; position: absolute; left: 50%; bottom: -5px; width: 4px; height: 1px; margin-left: -2px; background: #c7d8c4; }
.follow { margin-left: 137px; flex: none; width: 268px; display: flex; align-items: center; justify-content: space-between; font: 700 17px "Noto Sans", sans-serif; color: #4df23c; text-shadow: 0 0 5px #35d626; }
.follow i { font-style: normal; }
.follow .big { font-size: 21px; color: #7cf84e; }
.follow .dim { color: #2c9b24; font-size: 20px; text-shadow: none; }
.code { width: 16px; height: 16px; margin-right: -5px; }
.apps { display: flex; gap: 13px; margin-left: auto; }
.task { position: relative; }
.task svg { width: 16px; height: 16px; }
.tray { display: flex; align-items: center; margin-left: 118px; padding-right: 13px; gap: 4px; color: #b7c7c4; }
.tray svg { width: 11px; height: 12px; }
.t-up { margin-right: 6px; }
.lang { font-size: 8px; margin: 0 8px; color: #bccfb9; }
.clock { display: flex; flex-direction: column; text-align: right; font: 8px/11px var(--ui); color: #fff; width: 46px; }
.bell { margin-left: 1px; }

/* stream overlays */
.cover { position: absolute; left: 327px; top: 487px; width: 98px; height: 98px; border-radius: 50%; background: #434343; border: 3px solid #fff; box-shadow: 0 0 7px #00000030; }
.away { position: absolute; right: 29px; top: 372px; width: 272px; height: 272px; border-radius: 50%; display: flex; align-items: center; justify-content: center; background: radial-gradient(circle closest-side, #e5e5e5 75%, #dfe6de 80%, #bde5b9 86%, #bde5b9 93%, #d8e6d6 96%, #e5e5e5 99%); }
.away-disc { width: 198px; height: 198px; border-radius: 50%; background: #434343; border: 3px solid #fff; display: flex; flex-direction: column; align-items: center; padding-top: 24px; color: #fff; font-family: Lato, sans-serif; white-space: nowrap; }
.spinner { width: 32px; height: 32px; flex: none; border: 3px solid #fff; border-radius: 50%; position: relative; }
.spinner::before { content: ""; position: absolute; left: 3px; top: -1px; width: 7px; height: 7px; border-radius: 50%; background: #000; }
.away-title { font-size: 13px; line-height: 20px; margin-top: 11px; }
.away-title b { font-size: 17px; font-weight: 400; color: #4dfa3c; text-shadow: 0 0 3px #25c619; }
.away-ru { font-size: 11px; line-height: 14px; margin-top: 5px; color: #4def3d; }
.away-en { font-size: 9px; line-height: 13px; color: #389b30; }
.timer { margin-top: 8px; width: 139px; height: 41px; flex: none; border-radius: 21px; background: #fff; color: #000; text-align: center; font: 30px/41px "Liberation Mono", monospace; text-shadow: 0 0 1px #000; }
.goals { position: absolute; right: 45px; top: 36px; width: 259px; font-family: Inter, sans-serif; color: #fff; display: flex; flex-direction: column; }
.goal-title { font-size: 10px; font-weight: 700; line-height: 15px; height: 16px; text-align: center; text-shadow: 0 0 3px #777, 0 0 3px #999; }
.goal-bar { height: 25px; border-radius: 4px; background: #404040; display: flex; align-items: center; justify-content: center; font-size: 11px; line-height: 23px; font-weight: 800; }
.goal-scale { display: flex; justify-content: space-between; font-size: 8px; font-weight: 700; line-height: 14px; height: 5px; text-shadow: 0 0 2px #888, 0 0 2px #999; opacity: .8; }
.platform { position: absolute; right: 16px; top: 9px; display: flex; align-items: center; gap: 6px; height: 24px; padding: 0 2px; border-radius: 6px; background: #e2e2e6b0; }
.platform svg { width: 20px; height: 20px; }
.platform span { font: 900 18px/20px Inter, sans-serif; color: #fff; }
```
